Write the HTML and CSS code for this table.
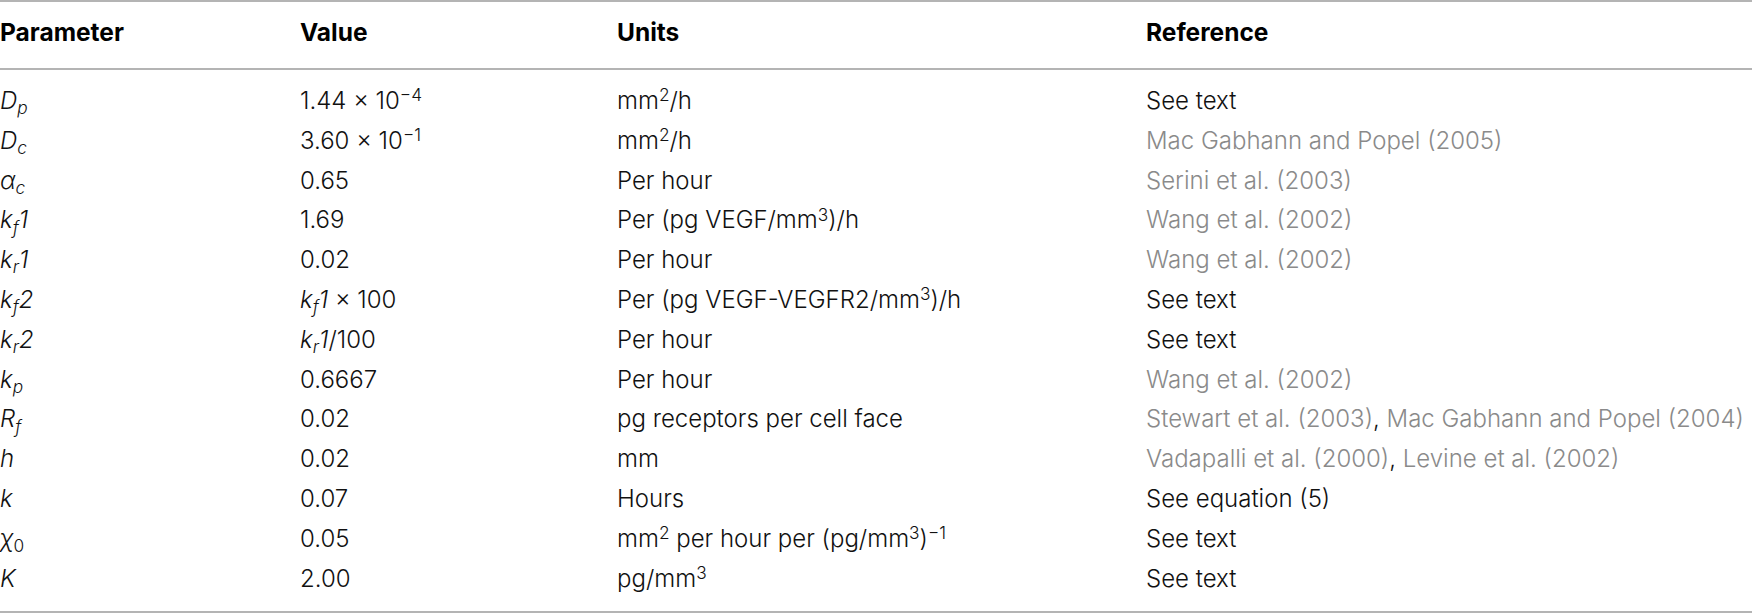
FILE: index.html
```html
<!DOCTYPE html>
<html>
<head>
<meta charset="utf-8">
<link rel="stylesheet" href="styles.css">
</head>
<body>
<table class="params">
  <colgroup>
    <col class="c-param"><col class="c-value"><col class="c-units"><col class="c-ref">
  </colgroup>
  <thead>
    <tr><th>Parameter</th><th>Value</th><th>Units</th><th>Reference</th></tr>
  </thead>
  <tbody>
    <tr class="first"><td><i>D<sub>p</sub></i></td><td>1.44 × 10<sup>−4</sup></td><td>mm<sup>2</sup>/h</td><td>See text</td></tr>
    <tr><td><i>D<sub>c</sub></i></td><td>3.60 × 10<sup>−1</sup></td><td>mm<sup>2</sup>/h</td><td><span class="cite">Mac Gabhann and Popel (2005)</span></td></tr>
    <tr><td><i>α<sub>c</sub></i></td><td>0.65</td><td>Per hour</td><td><span class="cite">Serini et al. (2003)</span></td></tr>
    <tr><td><i>k<sub>f</sub>1</i></td><td>1.69</td><td>Per (pg VEGF/mm<sup>3</sup>)/h</td><td><span class="cite">Wang et al. (2002)</span></td></tr>
    <tr><td><i>k<sub>r</sub>1</i></td><td>0.02</td><td>Per hour</td><td><span class="cite">Wang et al. (2002)</span></td></tr>
    <tr><td><i>k<sub>f</sub>2</i></td><td><i>k<sub>f</sub>1</i> × 100</td><td>Per (pg VEGF-VEGFR2/mm<sup>3</sup>)/h</td><td>See text</td></tr>
    <tr><td><i>k<sub>r</sub>2</i></td><td><i>k<sub>r</sub>1</i>/100</td><td>Per hour</td><td>See text</td></tr>
    <tr><td><i>k<sub>p</sub></i></td><td>0.6667</td><td>Per hour</td><td><span class="cite">Wang et al. (2002)</span></td></tr>
    <tr><td><i>R<sub>f</sub></i></td><td>0.02</td><td>pg receptors per cell face</td><td><span class="cite">Stewart et al. (2003)</span>, <span class="cite">Mac Gabhann and Popel (2004)</span></td></tr>
    <tr><td><i>h</i></td><td>0.02</td><td>mm</td><td><span class="cite">Vadapalli et al. (2000)</span>, <span class="cite">Levine et al. (2002)</span></td></tr>
    <tr><td><i>k</i></td><td>0.07</td><td>Hours</td><td>See equation (5)</td></tr>
    <tr><td><i>χ</i><sub>0</sub></td><td>0.05</td><td>mm<sup>2</sup> per hour per (pg/mm<sup>3</sup>)<sup>−1</sup></td><td>See text</td></tr>
    <tr class="last"><td><i>K</i></td><td>2.00</td><td>pg/mm<sup>3</sup></td><td>See text</td></tr>
  </tbody>
</table>
</body>
</html>
```
FILE: styles.css
```css
html, body {
  margin: 0;
  padding: 0;
  background: #ffffff;
}
body {
  font-family: Inter, "Liberation Sans", Arial, sans-serif;
  color: #111111;
}
.params {
  width: 1752px;
  border-collapse: collapse;
  table-layout: fixed;
  border-top: 2px solid #b4b4b4;
  border-bottom: 2px solid #b4b4b4;
}
.c-param { width: 300px; }
.c-value { width: 317px; }
.c-units { width: 529px; }
.c-ref { width: auto; }
.params th {
  text-align: left;
  font-weight: 700;
  font-size: 24.5px;
  color: #000;
  line-height: 61px;
  padding: 0 0 5px 0;
  vertical-align: top;
  white-space: nowrap;
  border-bottom: 2px solid #b4b4b4;
}
.params td {
  font-size: 24px;
  font-weight: 300;
  padding: 0;
  line-height: 39.8px;
  white-space: nowrap;
  vertical-align: top;
}
.params tr.first td { padding-top: 11px; }
.params tr.last td { padding-bottom: 13px; }
sub, sup {
  font-size: 0.72em;
  line-height: 0;
  position: relative;
  vertical-align: baseline;
}
sub { bottom: -0.3em; }
sup { top: -0.45em; }
i { font-style: italic; }
.cite { color: #8a8a8a; }
```
